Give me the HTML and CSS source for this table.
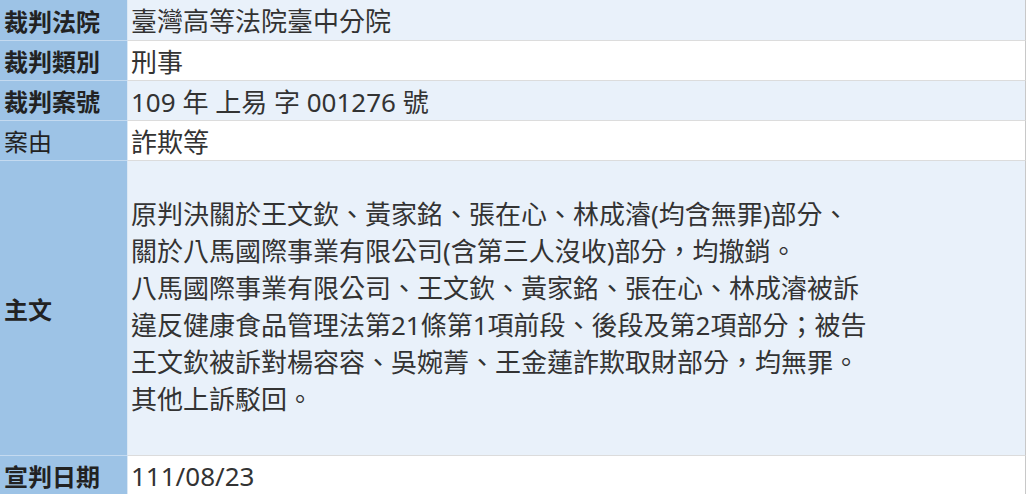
FILE: index.html
```html
<!DOCTYPE html>
<html lang="zh-Hant">
<head>
  <meta charset="UTF-8" />
  <title>裁判書查詢</title>
  <link rel="stylesheet" href="styles.css">
</head>
<body>
  <div class="judgment">
    <div class="row">
      <div class="label">裁判法院</div>
      <div class="value shade">臺灣高等法院臺中分院</div>
    </div>
    <div class="row">
      <div class="label">裁判類別</div>
      <div class="value">刑事</div>
    </div>
    <div class="row">
      <div class="label">裁判案號</div>
      <div class="value shade">109 年 上易 字 001276 號</div>
    </div>
    <div class="row">
      <div class="label light">案由</div>
      <div class="value">詐欺等</div>
    </div>
    <div class="row main">
      <div class="label">主文</div>
      <div class="value shade">
        原判決關於王文欽、黃家銘、張在心、林成濬(均含無罪)部分、<br />
        關於八馬國際事業有限公司(含第三人沒收)部分，均撤銷。<br />
        八馬國際事業有限公司、王文欽、黃家銘、張在心、林成濬被訴<br />
        違反健康食品管理法第21條第1項前段、後段及第2項部分；被告<br />
        王文欽被訴對楊容容、吳婉菁、王金蓮詐欺取財部分，均無罪。<br />
        其他上訴駁回。
      </div>
    </div>
    <div class="row">
      <div class="label">宣判日期</div>
      <div class="value">111/08/23</div>
    </div>
  </div>
</body>
</html>
```

FILE: styles.css
```css
body {
  margin: 0;
  font-family: "Noto Sans", "Noto Sans CJK TC", sans-serif;
  background: #fff;
  overflow: hidden;
}

.judgment {
  width: 1026px;
}

.row {
  display: flex;
  height: 40px;
}

.row:first-child {
  height: 41px;
}

.label {
  width: 128px;
  box-sizing: border-box;
  padding-left: 4px;
  background-color: #9dc3e6;
  color: #222;
  font-size: 24px;
  font-weight: bold;
  display: flex;
  align-items: center;
  border-bottom: 1px solid #c4daf0;
  border-right: 1px solid #dbe8f5;
}

.label.light {
  font-weight: normal;
}

.value {
  flex: 1;
  padding-left: 3px;
  color: #333;
  font-size: 26px;
  display: flex;
  align-items: center;
  border-bottom: 1px solid #dcdcdc;
  border-right: 1px solid #c8c8c8;
  background-color: #fff;
  white-space: nowrap;
}

.value.shade {
  background-color: #e9f1fa;
}

.row.main {
  height: 295px;
}

.row.main .value {
  display: block;
  line-height: 37px;
  padding-top: 35px;
  box-sizing: border-box;
}
```
